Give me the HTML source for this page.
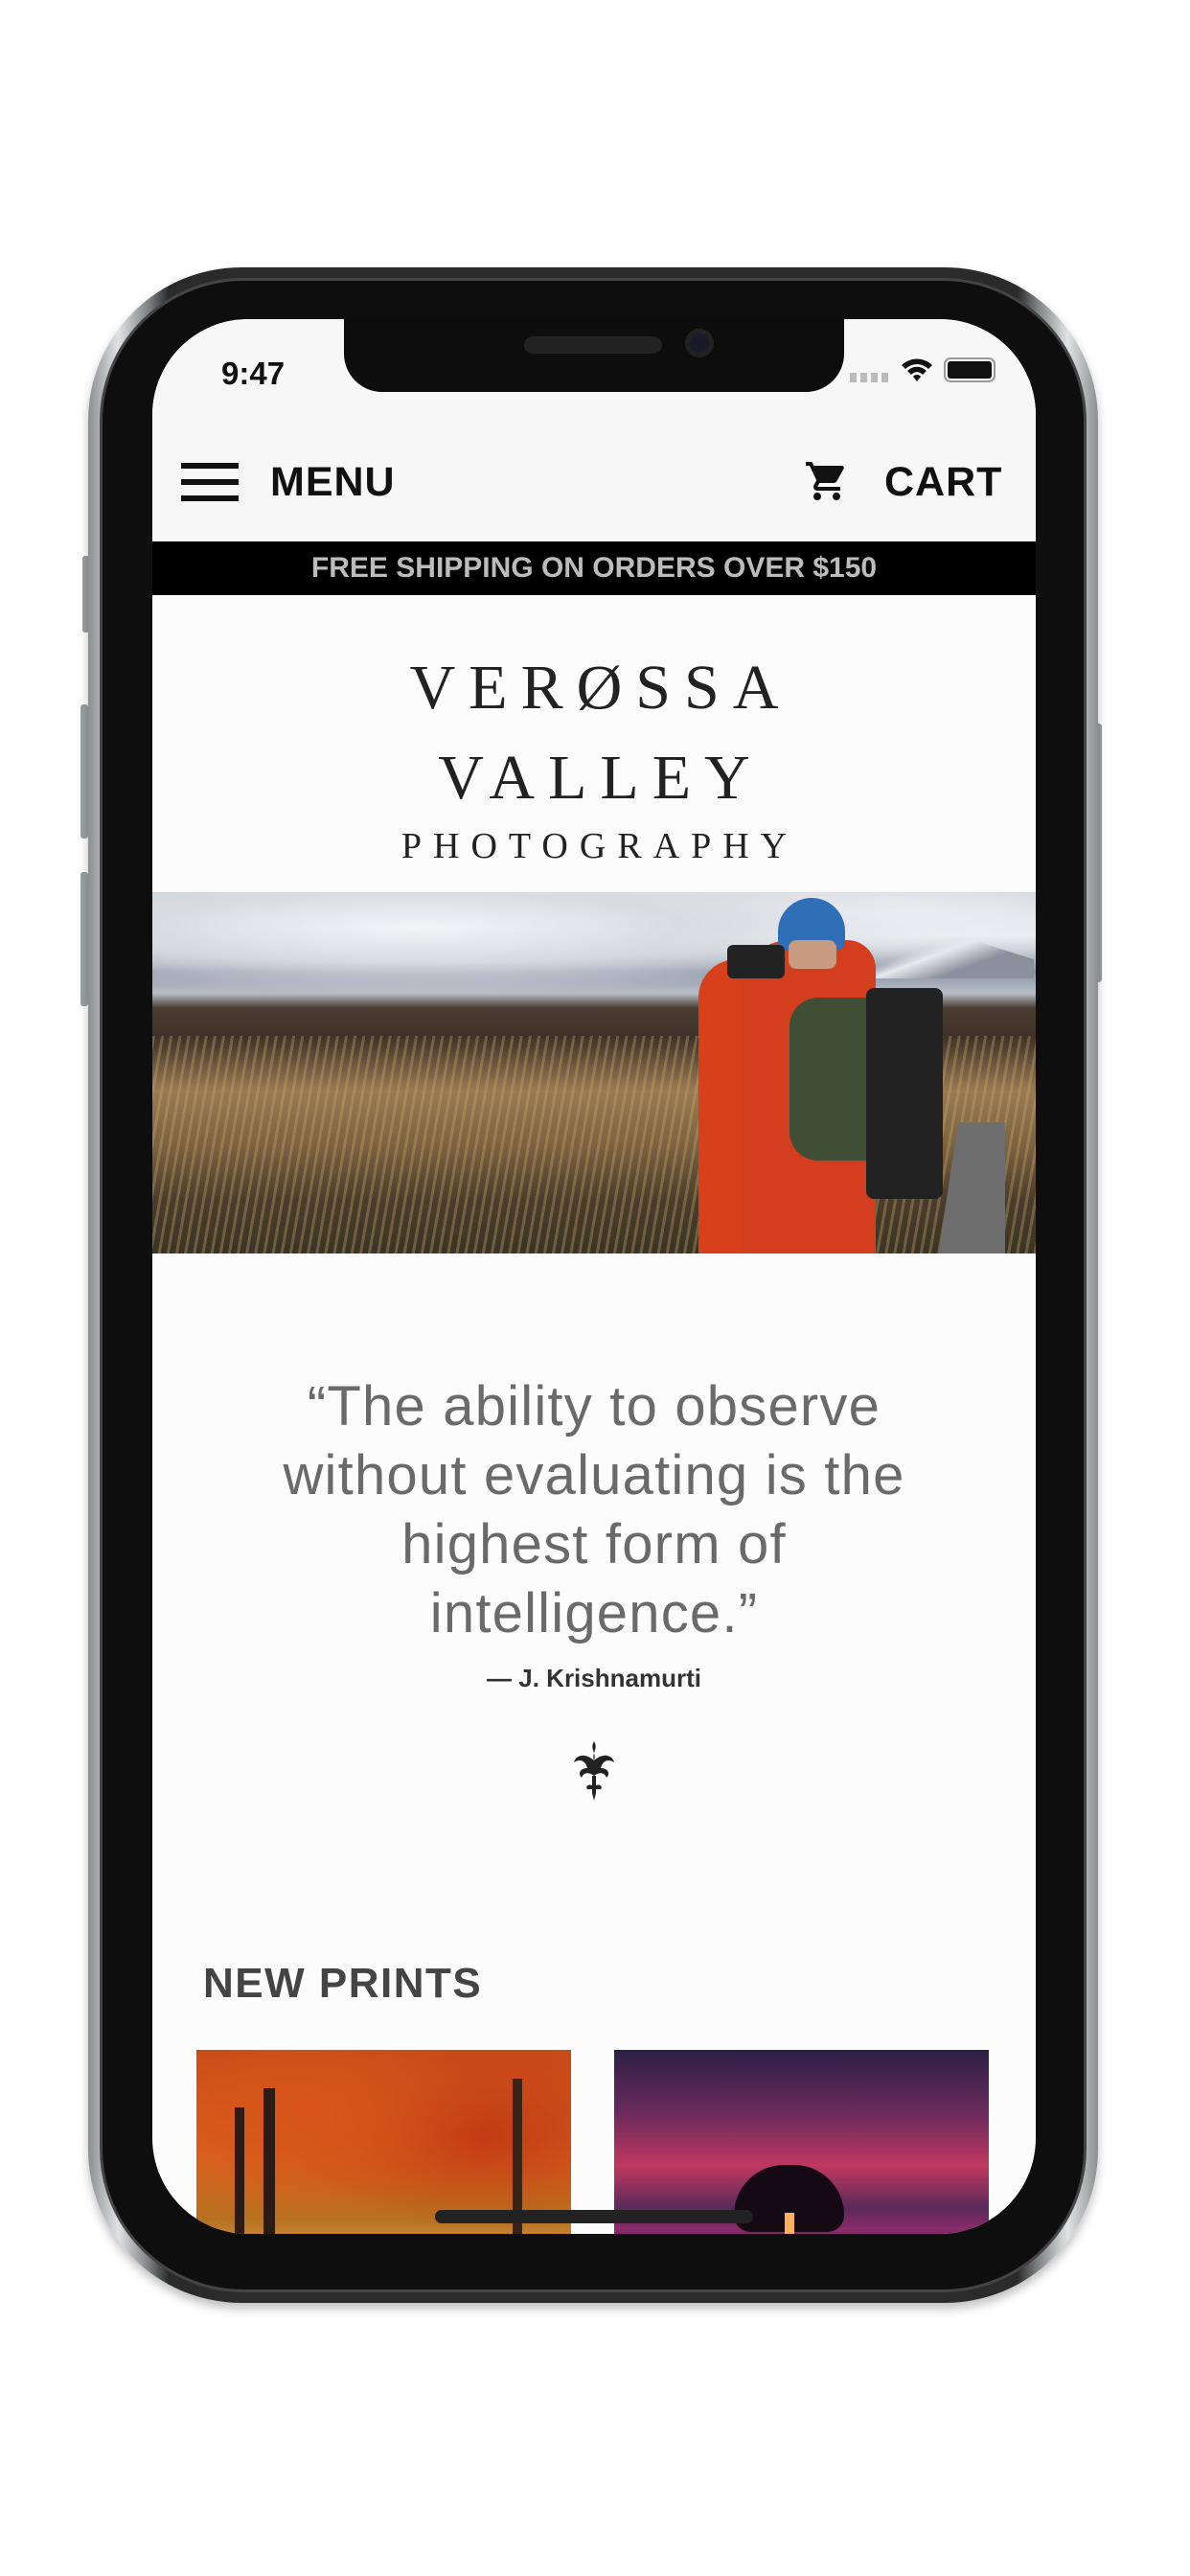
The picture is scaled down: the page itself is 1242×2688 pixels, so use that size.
<!DOCTYPE html>
<html><head><meta charset="utf-8">
<style>
*{margin:0;padding:0;box-sizing:border-box}
body{width:1242px;height:2688px;background:#fff;position:relative;overflow:hidden;font-family:"Liberation Sans",sans-serif}
.abs{position:absolute}
.outer{left:92px;top:279px;width:1054px;height:2124px;border-radius:160px;background:linear-gradient(90deg,#8a8f90,#dfe3e3 3%,#7d8182 6%,#2a2a2a 8%,#2a2a2a 92%,#7d8182 94%,#dfe3e3 97%,#8a8f90);box-shadow:0 6px 10px rgba(0,0,0,.25)}
.bez{left:104px;top:290px;width:1030px;height:2102px;border-radius:150px;background:#0e0e0e;border:3px solid #444}
.screen{left:159px;top:333px;width:922px;height:1998px;border-radius:100px;background:#fcfcfd;overflow:hidden}
.btn{background:#9aa0a0;border-radius:3px;width:8px}
</style></head><body>
<div class="abs btn" style="left:86px;top:580px;height:80px"></div>
<div class="abs btn" style="left:84px;top:735px;height:140px"></div>
<div class="abs btn" style="left:84px;top:910px;height:140px"></div>
<div class="abs btn" style="left:1142px;top:755px;height:270px"></div>
<div class="abs outer"></div>
<div class="abs bez"></div>
<div class="abs screen">
  <div class="abs" style="left:0;top:0;width:922px;height:232px;background:#f7f7f7"></div>
  <div class="abs" style="left:72px;top:38px;font-size:33px;font-weight:bold;color:#111">9:47</div>
  <div class="abs" style="left:728px;top:56px;width:42px;height:10px;background:repeating-linear-gradient(90deg,#bbb 0 7px,transparent 7px 11px)"></div>
  <svg class="abs" style="left:780px;top:38px" width="36" height="30" viewBox="0 0 36 30"><path d="M2 10 A23 23 0 0 1 34 10 L30 14 A17 17 0 0 0 6 14Z M8 16 A14 14 0 0 1 28 16 L24 20 A8 8 0 0 0 12 20Z M14 22 A5 5 0 0 1 22 22 L18 27Z" fill="#111"/></svg>
  <div class="abs" style="left:826px;top:40px;width:54px;height:26px;border:2px solid #999;border-radius:7px;padding:2px"><div style="width:100%;height:100%;background:#111;border-radius:3px"></div></div>
  <div class="abs" style="left:200px;top:0;width:522px;height:76px;background:#0d0d0d;border-radius:0 0 40px 40px"></div>
  <div class="abs" style="left:388px;top:18px;width:144px;height:18px;background:#222;border-radius:9px"></div>
  <div class="abs" style="left:556px;top:10px;width:30px;height:30px;background:#1a1a2a;border-radius:50%;border:5px solid #222"></div>
  <div class="abs" style="left:30px;top:150px;width:60px;height:6px;background:#111"></div>
  <div class="abs" style="left:30px;top:167px;width:60px;height:6px;background:#111"></div>
  <div class="abs" style="left:30px;top:184px;width:60px;height:6px;background:#111"></div>
  <div class="abs" style="left:123px;top:146px;font-size:43px;font-weight:bold;color:#111;letter-spacing:1px">MENU</div>
  <svg class="abs" style="left:680px;top:144px" width="48" height="50" viewBox="0 0 24 24"><path d="M7 18c-1.1 0-2 .9-2 2s.9 2 2 2 2-.9 2-2-.9-2-2-2zM1 2v2h2l3.6 7.6-1.350 2.4C4.6 15.4 5.5 17 7 17h12v-2H7.4c-.1 0-.2-.1-.2-.2l.9-1.8h7.4c.75 0 1.4-.4 1.7-1l3.6-6.5c.3-.5-.1-1.500-.9-1.500H5.2L4.3 2H1zm16 16c-1.1 0-2 .9-2 2s.9 2 2 2 2-.9 2-2-.9-2-2-2z" fill="#111"/></svg>
  <div class="abs" style="left:764px;top:146px;font-size:43px;font-weight:bold;color:#111;letter-spacing:1px">CART</div>
  <div class="abs" style="left:0;top:232px;width:922px;height:56px;background:#000;color:#bcbcbc;font-weight:bold;font-size:30px;text-align:center;line-height:56px">FREE SHIPPING ON ORDERS OVER $150</div>
  <div class="abs" style="left:0;top:338px;width:922px;text-align:center;font-family:'Liberation Serif',serif;color:#222;font-size:66px;letter-spacing:14px;line-height:94px;padding-left:14px">VERØSSA<br>VALLEY</div>
  <div class="abs" style="left:0;top:528px;width:922px;text-align:center;font-family:'Liberation Serif',serif;color:#222;font-size:38px;letter-spacing:12px;padding-left:12px">PHOTOGRAPHY</div>
  <div class="abs" style="left:0;top:598px;width:922px;height:377px;overflow:hidden;background:linear-gradient(180deg,#c9ced6 0%,#e8eaee 12%,#8c96a6 22%,#b8bec8 28%,#4a3e32 32%,#3e3228 40%,#9a7a52 55%,#7c6240 70%,#4b3d2c 85%,#3a3424 100%)">
    <div class="abs" style="left:0;top:0;width:922px;height:120px;background:radial-gradient(ellipse at 30% 30%,#f4f4f6 0,#d8dce2 30%,transparent 60%),radial-gradient(ellipse at 80% 20%,#eef0f3 0,transparent 40%)"></div>
    <div class="abs" style="left:720px;top:40px;width:200px;height:50px;background:linear-gradient(160deg,transparent 40%,#e6e9ee 50%,#8a909c 70%);clip-path:polygon(0 100%,45% 0,60% 10%,100% 60%,100% 100%)"></div>
    <div class="abs" style="left:0;top:150px;width:922px;height:227px;background:repeating-linear-gradient(100deg,rgba(200,170,110,.35) 0 3px,transparent 3px 9px)"></div>
    <div class="abs" style="left:570px;top:70px;width:100px;height:307px;background:#d8401c;border-radius:40px 40px 0 0"></div>
    <div class="abs" style="left:615px;top:50px;width:140px;height:327px;background:#d23e1e;border-radius:50px 30px 0 0"></div>
    <div class="abs" style="left:653px;top:6px;width:70px;height:55px;background:#2f6fb8;border-radius:35px 35px 10px 10px"></div>
    <div class="abs" style="left:664px;top:50px;width:50px;height:30px;background:#c89a80;border-radius:8px"></div>
    <div class="abs" style="left:600px;top:55px;width:60px;height:35px;background:#222;border-radius:6px"></div>
    <div class="abs" style="left:665px;top:110px;width:110px;height:170px;background:#3f4e34;border-radius:30px 20px 20px 30px"></div>
    <div class="abs" style="left:745px;top:100px;width:80px;height:220px;background:#222;border-radius:8px"></div>
    <div class="abs" style="left:820px;top:240px;width:70px;height:140px;background:#6e6e6e;clip-path:polygon(30% 0,100% 0,100% 100%,0 100%)"></div>
  </div>
  <div class="abs" style="left:0;top:1099px;width:922px;text-align:center;font-size:58px;line-height:72px;color:#6a6a6a;letter-spacing:1.2px">“The ability to observe<br>without evaluating is the<br>highest form of<br>intelligence.”</div>
  <div class="abs" style="left:0;top:1403px;width:922px;text-align:center;font-size:26px;font-weight:bold;color:#333">— J. Krishnamurti</div>
  <svg class="abs" style="left:434px;top:1482px" width="54" height="66" viewBox="0 0 54 66"><path d="M27 2 C22 10 30 14 27 22 C24 14 32 10 27 2Z M27 22 C18 14 8 16 6 24 C12 20 18 22 20 30 C12 30 10 36 14 40 C16 34 22 34 27 38 C32 34 38 34 40 40 C44 36 42 30 34 30 C36 22 42 20 48 24 C46 16 36 14 27 22Z M25 38 L29 38 L29 48 C34 46 36 50 34 52 L29 52 L29 56 L27 64 L25 56 L25 52 L20 52 C18 50 20 46 25 48Z" fill="#222"/></svg>
  <div class="abs" style="left:53px;top:1712px;font-size:44px;font-weight:bold;color:#444;letter-spacing:1.5px">NEW PRINTS</div>
  <div class="abs" style="left:46px;top:1806px;width:391px;height:220px;background:radial-gradient(ellipse at 30% 30%,#d8541a 0,transparent 50%),radial-gradient(ellipse at 75% 40%,#c23a14 0,transparent 50%),linear-gradient(180deg,#c84a18,#d8621c 50%,#b6701e 80%,#d9a054)">
    <div class="abs" style="left:40px;top:60px;width:10px;height:160px;background:#2a1c14"></div>
    <div class="abs" style="left:70px;top:40px;width:12px;height:180px;background:#2a1c14"></div>
    <div class="abs" style="left:330px;top:30px;width:10px;height:190px;background:#3a2418"></div>
  </div>
  <div class="abs" style="left:482px;top:1806px;width:391px;height:220px;background:linear-gradient(180deg,#2c2046 0%,#6a2a5a 30%,#c03860 55%,#5a2a5a 75%,#8a2a6a 85%,#4a1c4a 100%)">
    <div class="abs" style="left:125px;top:120px;width:115px;height:70px;background:#150a14;border-radius:60px 60px 20px 20px"></div>
    <div class="abs" style="left:178px;top:170px;width:10px;height:50px;background:#ffb060"></div>
  </div>
  <div class="abs" style="left:295px;top:1973px;width:332px;height:14px;background:#222;border-radius:7px"></div>
</div>
</body></html>
